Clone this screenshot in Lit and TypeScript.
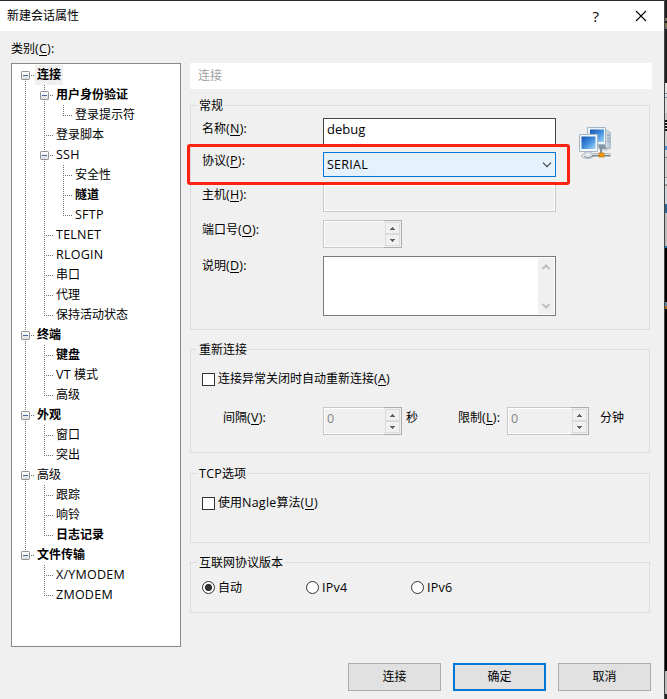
import { LitElement, html, css, svg, nothing } from "lit";
import { customElement, property } from "lit/decorators.js";
import { classMap } from "lit/directives/class-map.js";
import { styleMap } from "lit/directives/style-map.js";

/* Latin runs are set slightly larger than the 12px CJK glyphs; "_X" marks a mnemonic. */
const label = (text: string) =>
  text.split(/([\x21-\x7e]+)/).map((part) => {
    if (!/^[\x21-\x7e]+$/.test(part)) return part;
    const m = part.match(/^(.*)_(.)(.*)$/);
    return m
      ? html`<span class="lat">${m[1]}<span class="key">${m[2]}</span>${m[3]}</span>`
      : html`<span class="lat">${part}</span>`;
  });

const textStyles = css`
  .lat { font-size: 12.5px; letter-spacing: 0.25px; }
  .key { border-bottom: 1px solid currentColor; display: inline-block; height: 13px; line-height: 13px; }
`;

/* Guide codes: v = through line, t = branch, l = last branch, - = blank,
   f/m/e = expander at first / middle / last position. */
interface Node { g: string; text: string; bold?: boolean; selected?: boolean }
const nodes: Node[] = [
  { g: "f", text: "连接", bold: true, selected: true },
  { g: "vm", text: "用户身份验证", bold: true },
  { g: "vvl", text: "登录提示符" },
  { g: "vt", text: "登录脚本" },
  { g: "vm", text: "SSH" },
  { g: "vvt", text: "安全性" },
  { g: "vvt", text: "隧道", bold: true },
  { g: "vvl", text: "SFTP" },
  { g: "vt", text: "TELNET" },
  { g: "vt", text: "RLOGIN" },
  { g: "vt", text: "串口" },
  { g: "vt", text: "代理" },
  { g: "vl", text: "保持活动状态" },
  { g: "m", text: "终端", bold: true },
  { g: "vt", text: "键盘", bold: true },
  { g: "vt", text: "VT 模式" },
  { g: "vl", text: "高级" },
  { g: "m", text: "外观", bold: true },
  { g: "vt", text: "窗口" },
  { g: "vl", text: "突出" },
  { g: "m", text: "高级" },
  { g: "vt", text: "跟踪" },
  { g: "vt", text: "响铃" },
  { g: "vl", text: "日志记录", bold: true },
  { g: "e", text: "文件传输", bold: true },
  { g: "-t", text: "X/YMODEM" },
  { g: "-l", text: "ZMODEM" },
];

@customElement("category-tree")
export class CategoryTree extends LitElement {
  static styles = [textStyles, css`
    :host { display: block; box-sizing: border-box; border: 1px solid #828790; background: #fff; padding: 1px 0 0 4px; }
    .row { display: flex; height: 20px; }
    .guide { flex: none; width: 19px; height: 20px; }
    .name { padding: 0 2px; line-height: 19px; height: 20px; white-space: nowrap; }
    .bold { font-weight: 700; }
    .selected { background: #f0f0f0; }
  `];

  private guide(code: string) {
    const box = "fme".includes(code);
    const top = "vtlme".includes(code);
    const bottom = "vtfm".includes(code) && code !== "f" || code === "f";
    const line = (d: string) => svg`<path d=${d} stroke="#707070" stroke-dasharray="1 1" fill="none" shape-rendering="crispEdges"/>`;
    return html`<svg class="guide" viewBox="0 0 19 20">
      <defs><linearGradient id="f" x2="0" y2="1"><stop offset="0" stop-color="#fff"/><stop offset="1" stop-color="#dcdcdc"/></linearGradient></defs>
      ${top ? line("M9.5 0V10") : nothing}
      ${bottom ? line("M9.5 10V20") : nothing}
      ${"tl".includes(code) ? line("M9 10.5H18") : nothing}
      ${box ? svg`${line("M15 10.5H18")}
        <rect x="5.5" y="6.5" width="8" height="8" rx="0.8" fill="url(#f)" stroke="#919191"/>
        <path d="M7 10.5H12" stroke="#4b63a7" shape-rendering="crispEdges"/>` : nothing}
    </svg>`;
  }

  render() {
    return nodes.map((n) => html`<div class="row">
      ${[...n.g].map((c) => this.guide(c))}
      <span class=${classMap({ name: true, bold: !!n.bold, selected: !!n.selected })}>${label(n.text)}</span>
    </div>`);
  }
}

@customElement("number-spin")
export class NumberSpin extends LitElement {
  @property() value = "";
  static styles = [textStyles, css`
    :host { display: flex; box-sizing: border-box; height: 28px; color: #838383; }
    .field { flex: 1; box-sizing: border-box; border: 1px solid #c8c8c8; border-right: 0; padding: 1px 0 0 3px; line-height: 19px; box-shadow: inset 1px 1px #fff, inset 0 -1px #fff; }
    .steps { width: 18px; box-sizing: border-box; border: 1px solid #abadb3; border-left: 0; padding: 1px; display: grid; grid-template-rows: 1fr 1fr; }
    .step { border: 1px solid #dadada; display: grid; place-items: center; }
  `];
  render() {
    return html`
      <div class="field">${label(this.value)}</div>
      <div class="steps">
        <div class="step"><svg width="5" height="3"><path d="M2 0h1v1h1v1h1v1H0V2h1V1h1z" fill="#606060"/></svg></div>
        <div class="step"><svg width="5" height="3"><path d="M0 0h5v1H4v1H3v1H2V2H1V1H0z" fill="#606060"/></svg></div>
      </div>`;
  }
}

/* Slivers of the desktop visible beyond the dialog's right edge. */
const backdrop: [number, string][] = [
  [18, "#202020"], [3, "#76735a"], [2, "#202020"], [4, "#7b7343"], [2, "#6f6f6f"], [54, "#202020"],
  [10, "#e8e8e8"], [1, "#7d8794"], [3, "#dfe8f0"], [1, "#7d8794"], [15, "#dedede"], [7, "#c9c9c9"],
  [2, "#111"], [1, "#ddd"], [2, "#111"], [1, "#ddd"], [2, "#111"], [1, "#ddd"], [2, "#111"],
  [15, "#d0d0d0"], [4, "#4a93d9"], [7, "#d6d6d6"], [1, "#888"], [19, "#d0d0d0"], [1, "#999"], [6, "#dbe2e8"], [2, "#999"],
  [18, "#cfd6dc"], [9, "#2a6496"], [33, "#bdbdbd"], [2, "#1273b8"],
  [54, "#000"], [1, "#777"], [3, "#5b82a0"], [3, "#b06a12"], [362, "#000"], [23, "#bdbdbd"], [5, "#222"],
];

@customElement("app-root")
export class AppRoot extends LitElement {
  static styles = [textStyles, css`
    :host {
      display: grid; grid-template-columns: 664px 1px 2px; width: 667px; height: 699px; overflow: hidden;
      font: 12px/16px "Open Sans", "Noto Sans CJK SC", sans-serif; color: #000; background: #202020;
    }
    .edge { background: #444; }
    .window { border-top: 1px solid #2b2b2b; background: #f0f0f0; height: 698px; display: flex; flex-direction: column; }
    .titlebar { height: 30px; background: #fff; display: flex; align-items: center; padding: 0 17px 0 7px; box-sizing: border-box; }
    .title { flex: 1; }
    .help { font-size: 15px; margin-right: 36px; }
    .caption { padding: 10px 0 0 11px; height: 22px; }
    .body { display: flex; gap: 9px; padding-left: 11px; height: 584px; }
    category-tree { width: 170px; height: 584px; }
    .page { width: 462px; }
    .banner { height: 26px; line-height: 26px; padding-left: 8px; background: #fff; color: #a0a0a0; }
    .group { width: 460px; box-sizing: border-box; border: 1px solid #dcdcdc; padding-left: 11px; }
    .legend { width: max-content; height: 16px; margin: -8px 0 0 -5px; padding: 0 2px; background: #f0f0f0; }
    .general { height: 225px; margin-top: 16px; display: grid; grid-template-columns: 121px 233px 1fr; grid-template-rows: 12px 34px 32px 36px 36px 60px; align-items: start; }
    .general .legend { grid-column: 1 / -1; }
    .general .text { padding-top: 3px; }
    .general .text.up1 { padding-top: 2px; }
    .general .text.up2 { padding-top: 1px; }
    .reconnect { height: 104px; margin-top: 19px; }
    .tcp { height: 70px; margin-top: 20px; }
    .ip { height: 51px; margin-top: 19px; }
    .input { box-sizing: border-box; height: 28px; padding: 1px 0 0 3px; border: 1px solid #444; background: #fff; line-height: 19px; }
    .input .lat { font-size: 13px; letter-spacing: 0; }
    .disabled { border-color: #c8c8c8; background: #f0f0f0; box-shadow: inset 0 0 0 1px #fff; }
    .combo { box-sizing: border-box; height: 25px; border: 1px solid #0078d7; background: #e5f1fb; display: flex; align-items: center; justify-content: space-between; padding: 0 3px; position: relative; }
    .highlight { position: absolute; left: -137px; top: -9px; width: 377px; height: 35px; border: 3px solid #fe2212; border-radius: 3px; z-index: 1; }
    .memo { box-sizing: border-box; height: 60px; border: 1px solid #7a7a7a; background: #fff; padding: 1px; display: flex; justify-content: flex-end; }
    .scroll { width: 16px; background: #f0f0f0; display: flex; flex-direction: column; justify-content: space-between; align-items: center; padding: 6px 0 5px; box-sizing: border-box; }
    .net { margin: 9px 0 0 23px; grid-row: 2; grid-column: 3; }
    .spin { width: 79px; }
    .check { display: flex; align-items: center; gap: 3px; height: 16px; }
    .first { margin-top: 13px; }
    .box { width: 13px; height: 13px; box-sizing: border-box; border: 1px solid #333; background: #fff; }
    .interval { display: grid; grid-template-columns: 100px 79px 56px 49px 82px 1fr; padding-left: 21px; margin-top: 20px; align-items: start; }
    .interval .text { padding-top: 3px; }
    .unit { padding: 3px 0 0 4px; }
    .far { padding-left: 11px; }
    .radios { display: grid; grid-template-columns: 104px 105px 1fr; margin-top: 9px; }
    .dot { width: 13px; height: 13px; box-sizing: border-box; margin-top: -2px; border: 1px solid #333; border-radius: 50%; background: #fff; }
    .on { background: radial-gradient(circle, #333 3.3px, #fff 3.9px); }
    .footer { display: flex; gap: 12px; padding: 16px 0 0 348px; }
    .button { width: 93px; height: 28px; box-sizing: border-box; border: 1px solid #adadad; background: #e1e1e1; display: grid; place-items: center; }
    .default { border: 2px solid #0078d7; }
  `];

  private network = html`<svg class="net" width="32" height="32" viewBox="0 0 32 32">
    <defs>
      <linearGradient id="s" x2="1" y2="1"><stop offset="0" stop-color="#1554b4"/><stop offset=".5" stop-color="#3f8bdc"/><stop offset="1" stop-color="#a3d9f8"/></linearGradient>
      <linearGradient id="c"><stop offset="0" stop-color="#f4f7fa"/><stop offset="1" stop-color="#aebdcb"/></linearGradient>
    </defs>
    <path d="M24 3h4l4 3v15l-4 2h-6z" fill="url(#c)" stroke="#a9b7c4" stroke-width=".7"/>
    <path d="M28 8l3 1M28 11l3 1M28 14l3 1" stroke="#8799aa" stroke-width=".8"/>
    <path d="M8.5.5h18v17h-18z" fill="#edf2f6" stroke="#a5b7c7"/>
    <path d="M11 2.500h14V15H11z" fill="url(#s)"/>
    <path d="M19 18h7l2 4h-8z" fill="#8798a7"/>
    <path d="M.5 7.500h18v17H.5z" fill="#f4f7f9" stroke="#a5b7c7"/>
    <path d="M2.500 9.500h14V22h-14z" fill="url(#s)"/>
    <path d="M6 25h6v2q3 .5 2 2.500-1 2-5.500 2T2.500 29.500Q2 27.500 6 27z" fill="#e6ecf1" stroke="#9eacb8" stroke-width=".8"/>
    <path d="M5 29.500q4 2 8 0" fill="none" stroke="#8b9aa8"/>
    <path d="M22 20v6" stroke="#81909c" stroke-width="2"/>
    <path d="M13 28h18.500" stroke="#788894" stroke-width="3"/><path d="M13 27.500h18.500" stroke="#d7dfe5"/>
    <rect x="20" y="26" width="5" height="4" fill="#f49a0c" stroke="#c77608" stroke-width=".7"/>
  </svg>`;

  render() {
    return html`
      <div class="window">
        <div class="titlebar">
          <span class="title">新建会话属性</span>
          <span class="help">?</span>
          <svg width="12" height="12"><path d="M1 1L11 11M11 1L1 11" stroke="#000" stroke-width="1.1"/></svg>
        </div>
        <div class="caption">${label("类别(_C):")}</div>
        <div class="body">
          <category-tree></category-tree>
          <div class="page">
            <div class="banner">连接</div>
            <div class="group general">
              <div class="legend">常规</div>
              <div class="text">${label("名称(_N):")}</div>
              <div class="input">${label("debug")}</div>
              ${this.network}
              <div class="text up2">${label("协议(_P):")}</div>
              <div class="combo">
                <span>${label("SERIAL")}</span>
                <svg width="10" height="6"><path d="M1 .7L5 4.700L9 .7" fill="none" stroke="#444" stroke-width="1.2"/></svg>
                <div class="highlight"></div>
              </div><span></span>
              <div class="text">${label("主机(_H):")}</div>
              <div class="input disabled"></div><span></span>
              <div class="text up1">${label("端口号(_O):")}</div>
              <number-spin class="spin"></number-spin><span></span>
              <div class="text up1">${label("说明(_D):")}</div>
              <div class="memo"><div class="scroll">
                <svg width="8" height="6"><path d="M.5 5L4 1.500L7.500 5" fill="none" stroke="#bfbfbf" stroke-width="2"/></svg>
                <svg width="8" height="6"><path d="M.5 1L4 4.500L7.500 1" fill="none" stroke="#bfbfbf" stroke-width="2"/></svg>
              </div></div>
            </div>
            <div class="group reconnect">
              <div class="legend">重新连接</div>
              <div class="check first"><span class="box"></span><span>${label("连接异常关闭时自动重新连接(_A)")}</span></div>
              <div class="interval">
                <span class="text">${label("间隔(_V):")}</span>
                <number-spin value="0"></number-spin>
                <span class="unit">秒</span>
                <span class="text">${label("限制(_L):")}</span>
                <number-spin value="0"></number-spin>
                <span class="unit far">分钟</span>
              </div>
            </div>
            <div class="group tcp">
              <div class="legend">${label("TCP选项")}</div>
              <div class="check first"><span class="box"></span><span>${label("使用Nagle算法(_U)")}</span></div>
            </div>
            <div class="group ip">
              <div class="legend">互联网协议版本</div>
              <div class="radios">
                <div class="check"><span class="dot on"></span><span>自动</span></div>
                <div class="check"><span class="dot"></span><span>${label("IPv4")}</span></div>
                <div class="check"><span class="dot"></span><span>${label("IPv6")}</span></div>
              </div>
            </div>
          </div>
        </div>
        <div class="footer">
          <div class="button">连接</div>
          <div class="button default">确定</div>
          <div class="button">取消</div>
        </div>
      </div>
      <div class="edge"></div>
      <div>${backdrop.map(([h, c]) => html`<div style=${styleMap({ height: `${h}px`, background: c })}></div>`)}</div>
    `;
  }
}
